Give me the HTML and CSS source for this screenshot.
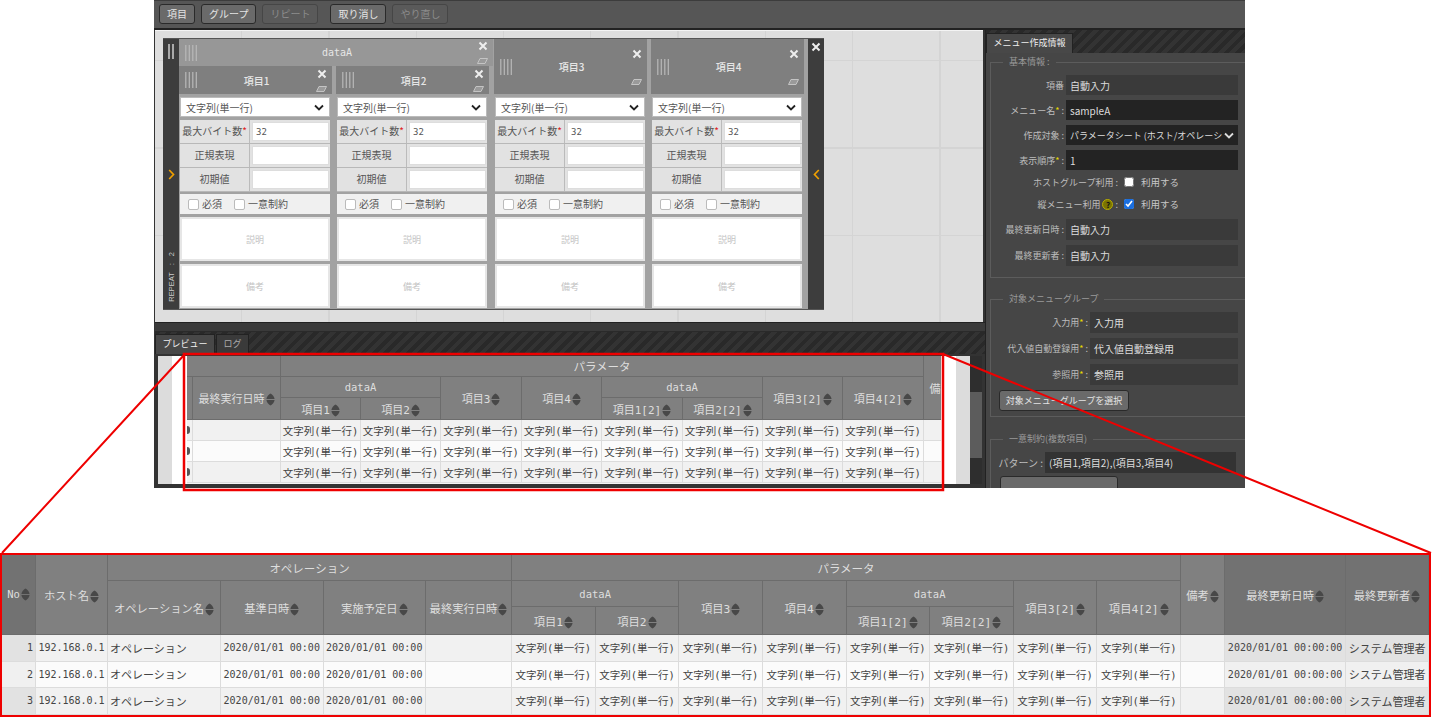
FILE: index.html
```html
<!DOCTYPE html>
<html lang="ja">
<head>
  <meta charset="UTF-8">
  <title>メニュー作成</title>
  <link rel="stylesheet" href="styles.css">
</head>
<body>
  <!-- shared icons -->
  <svg class="defs" aria-hidden="true">
    <symbol id="sort" viewBox="0 0 9 13"><path d="M4.5 .5C6.6 1.6 8.2 3.4 8.6 6H.4C.8 3.4 2.4 1.600 4.500 .5Z" fill="#484848"/><path d="M4.500 12.500C2.400 11.400 .8 9.600 .4 7H8.600C8.200 9.600 6.600 11.400 4.500 12.500Z" fill="#484848"/></symbol>
    <symbol id="grip" viewBox="0 0 13 16"><path d="M.8 0V16M4.300 0V16M7.800 0V16M11.300 0V16" stroke="#b9b9b9" stroke-width="1.200" fill="none"/></symbol>
    <symbol id="close" viewBox="0 0 10 10"><path d="M1.500 1.500L8.500 8.500M8.500 1.500L1.500 8.500" stroke="#eee" stroke-width="2" fill="none"/></symbol>
    <symbol id="eraser" viewBox="0 0 11 6"><path d="M3 .5H10.500L8 5.500H.5Z" fill="#9a9a9a" stroke="#c4c4c4"/></symbol>
    <symbol id="chevron" viewBox="0 0 10 7"><path d="M1 1.500L5 5.500L9 1.500" stroke="currentColor" stroke-width="1.800" fill="none"/></symbol>
    <symbol id="open" viewBox="0 0 7 11"><path d="M1.200 1L5.500 5.500L1.200 10" stroke="#f0a000" stroke-width="1.700" fill="none"/></symbol>
    <symbol id="shut" viewBox="0 0 7 11"><path d="M5.800 1L1.500 5.500L5.800 10" stroke="#f0a000" stroke-width="1.700" fill="none"/></symbol>
  </svg>

  <div class="app">
    <div class="toolbar">
      <button class="btn">項目</button>
      <button class="btn">グループ</button>
      <button class="btn off">リピート</button>
      <button class="btn gap">取り消し</button>
      <button class="btn off">やり直し</button>
    </div>

    <div class="app-body">
      <div class="main">
        <div class="canvas">
          <div class="repeat">
            <div class="side">
              <span class="handle"></span>
              <svg class="arrow"><use href="#open"/></svg>
              <span class="repeat-label">REPEAT : 2</span>
            </div>

            <div class="group">
              <div class="head head-group">
                <svg class="grip"><use href="#grip"/></svg>
                <span class="title">dataA</span>
                <span class="tools"><svg class="ico-x"><use href="#close"/></svg><svg class="ico-e"><use href="#eraser"/></svg></span>
              </div>
              <div class="group-items">
                <div class="item">
                  <div class="head">
                    <svg class="grip"><use href="#grip"/></svg>
                    <span class="title">項目1</span>
                    <span class="tools"><svg class="ico-x"><use href="#close"/></svg><svg class="ico-e"><use href="#eraser"/></svg></span>
                  </div>
                  <div class="item-body">
                    <div class="select">文字列(単一行)<svg class="chev"><use href="#chevron"/></svg></div>
                    <div class="prop"><span class="prop-name">最大バイト数<i>*</i></span><span class="prop-val">32</span></div>
                    <div class="prop"><span class="prop-name">正規表現</span><span class="prop-val"></span></div>
                    <div class="prop"><span class="prop-name">初期値</span><span class="prop-val"></span></div>
                    <div class="checks"><label><input type="checkbox">必須</label><label><input type="checkbox">一意制約</label></div>
                    <div class="note"><span>説明</span></div>
                    <div class="note"><span>備考</span></div>
                  </div>
                </div>
                <div class="item">
                  <div class="head">
                    <svg class="grip"><use href="#grip"/></svg>
                    <span class="title">項目2</span>
                    <span class="tools"><svg class="ico-x"><use href="#close"/></svg><svg class="ico-e"><use href="#eraser"/></svg></span>
                  </div>
                  <div class="item-body">
                    <div class="select">文字列(単一行)<svg class="chev"><use href="#chevron"/></svg></div>
                    <div class="prop"><span class="prop-name">最大バイト数<i>*</i></span><span class="prop-val">32</span></div>
                    <div class="prop"><span class="prop-name">正規表現</span><span class="prop-val"></span></div>
                    <div class="prop"><span class="prop-name">初期値</span><span class="prop-val"></span></div>
                    <div class="checks"><label><input type="checkbox">必須</label><label><input type="checkbox">一意制約</label></div>
                    <div class="note"><span>説明</span></div>
                    <div class="note"><span>備考</span></div>
                  </div>
                </div>
              </div>
            </div>

            <div class="item">
              <div class="head head-tall">
                <svg class="grip"><use href="#grip"/></svg>
                <span class="title">項目3</span>
                <span class="tools"><svg class="ico-x"><use href="#close"/></svg><svg class="ico-e"><use href="#eraser"/></svg></span>
              </div>
              <div class="item-body">
                <div class="select">文字列(単一行)<svg class="chev"><use href="#chevron"/></svg></div>
                <div class="prop"><span class="prop-name">最大バイト数<i>*</i></span><span class="prop-val">32</span></div>
                <div class="prop"><span class="prop-name">正規表現</span><span class="prop-val"></span></div>
                <div class="prop"><span class="prop-name">初期値</span><span class="prop-val"></span></div>
                <div class="checks"><label><input type="checkbox">必須</label><label><input type="checkbox">一意制約</label></div>
                <div class="note"><span>説明</span></div>
                <div class="note"><span>備考</span></div>
              </div>
            </div>

            <div class="item">
              <div class="head head-tall">
                <svg class="grip"><use href="#grip"/></svg>
                <span class="title">項目4</span>
                <span class="tools"><svg class="ico-x"><use href="#close"/></svg><svg class="ico-e"><use href="#eraser"/></svg></span>
              </div>
              <div class="item-body">
                <div class="select">文字列(単一行)<svg class="chev"><use href="#chevron"/></svg></div>
                <div class="prop"><span class="prop-name">最大バイト数<i>*</i></span><span class="prop-val">32</span></div>
                <div class="prop"><span class="prop-name">正規表現</span><span class="prop-val"></span></div>
                <div class="prop"><span class="prop-name">初期値</span><span class="prop-val"></span></div>
                <div class="checks"><label><input type="checkbox">必須</label><label><input type="checkbox">一意制約</label></div>
                <div class="note"><span>説明</span></div>
                <div class="note"><span>備考</span></div>
              </div>
            </div>

            <div class="side side-right">
              <svg class="ico-x"><use href="#close"/></svg>
              <svg class="arrow"><use href="#shut"/></svg>
            </div>
          </div>
        </div>

        <div class="splitter"></div>

        <div class="preview">
          <div class="tabs">
            <span class="tab on">プレビュー</span>
            <span class="tab">ログ</span>
          </div>
          <div class="preview-body">
            <div class="strip"></div>
            <div class="gutter"></div>
            <div class="viewport">
              <table class="grid grid-small">
                <colgroup><col class="p-cut"><col class="p-last"><col class="p-a"><col class="p-a"><col class="p-b"><col class="p-a"><col class="p-b"><col class="p-a"><col class="p-a"><col class="p-b"><col class="p-note"></colgroup>
                <thead>
                  <tr>
                    <th colspan="2"></th>
                    <th colspan="8" class="big">パラメータ</th>
                    <th rowspan="3">備考<svg class="sort"><use href="#sort"/></svg></th>
                  </tr>
                  <tr>
                    <th rowspan="2"></th>
                    <th rowspan="2">最終実行日時<svg class="sort"><use href="#sort"/></svg></th>
                    <th colspan="2" class="latin">dataA</th>
                    <th rowspan="2">項目3<svg class="sort"><use href="#sort"/></svg></th>
                    <th rowspan="2">項目4<svg class="sort"><use href="#sort"/></svg></th>
                    <th colspan="2" class="latin">dataA</th>
                    <th rowspan="2">項目3[2]<svg class="sort"><use href="#sort"/></svg></th>
                    <th rowspan="2">項目4[2]<svg class="sort"><use href="#sort"/></svg></th>
                  </tr>
                  <tr>
                    <th>項目1<svg class="sort"><use href="#sort"/></svg></th>
                    <th>項目2<svg class="sort"><use href="#sort"/></svg></th>
                    <th>項目1[2]<svg class="sort"><use href="#sort"/></svg></th>
                    <th>項目2[2]<svg class="sort"><use href="#sort"/></svg></th>
                  </tr>
                </thead>
                <tbody>
                  <tr><td class="cut"><span></span></td><td></td><td>文字列(単一行)</td><td>文字列(単一行)</td><td>文字列(単一行)</td><td>文字列(単一行)</td><td>文字列(単一行)</td><td>文字列(単一行)</td><td>文字列(単一行)</td><td>文字列(単一行)</td><td></td></tr>
                  <tr><td class="cut"><span></span></td><td></td><td>文字列(単一行)</td><td>文字列(単一行)</td><td>文字列(単一行)</td><td>文字列(単一行)</td><td>文字列(単一行)</td><td>文字列(単一行)</td><td>文字列(単一行)</td><td>文字列(単一行)</td><td></td></tr>
                  <tr><td class="cut"><span></span></td><td></td><td>文字列(単一行)</td><td>文字列(単一行)</td><td>文字列(単一行)</td><td>文字列(単一行)</td><td>文字列(単一行)</td><td>文字列(単一行)</td><td>文字列(単一行)</td><td>文字列(単一行)</td><td></td></tr>
                </tbody>
              </table>
            </div>
            <div class="gutter"></div>
            <div class="strip"></div>
            <div class="scrollbar"><span></span></div>
          </div>
        </div>
      </div>

      <div class="panel">
        <div class="tabs tabs-panel">
          <span class="tab on">メニュー作成情報</span>
        </div>

        <fieldset class="box box-info">
          <legend>基本情報 :</legend>
          <div class="field"><span class="field-label">項番</span><span class="field-box">自動入力</span></div>
          <div class="field"><span class="field-label">メニュー名<i>*</i> :</span><span class="field-box edit">sampleA</span></div>
          <div class="field"><span class="field-label">作成対象 :</span><span class="field-box edit select-dark">パラメータシート (ホスト/オペレーシ<svg class="chev chev-light"><use href="#chevron"/></svg></span></div>
          <div class="field"><span class="field-label">表示順序<i>*</i> :</span><span class="field-box edit">1</span></div>
          <div class="field field-check"><span class="field-label">ホストグループ利用 :</span><label class="check-text"><input type="checkbox">利用する</label></div>
          <div class="field field-check"><span class="field-label">縦メニュー利用 <b class="help">?</b> :</span><label class="check-text"><input type="checkbox" checked>利用する</label></div>
          <div class="field"><span class="field-label">最終更新日時 :</span><span class="field-box tall">自動入力</span></div>
          <div class="field"><span class="field-label">最終更新者 :</span><span class="field-box tall">自動入力</span></div>
        </fieldset>

        <fieldset class="box box-group">
          <legend>対象メニューグループ</legend>
          <div class="field"><span class="field-label">入力用<i>*</i> :</span><span class="field-box tall">入力用</span></div>
          <div class="field"><span class="field-label">代入値自動登録用<i>*</i> :</span><span class="field-box tall">代入値自動登録用</span></div>
          <div class="field"><span class="field-label">参照用<i>*</i> :</span><span class="field-box tall">参照用</span></div>
          <button class="btn btn-wide">対象メニューグループを選択</button>
        </fieldset>

        <fieldset class="box box-unique">
          <legend>一意制約(複数項目)</legend>
          <div class="field"><span class="field-label">パターン :</span><span class="field-box tall">(項目1,項目2),(項目3,項目4)</span></div>
          <button class="btn btn-cut"></button>
        </fieldset>
      </div>
    </div>
  </div>

  <div class="detail">
    <table class="grid grid-large">
      <colgroup><col class="c-no"><col class="c-host"><col class="c-op"><col class="c-date"><col class="c-date"><col class="c-last"><col class="c-a"><col class="c-a"><col class="c-a"><col class="c-a"><col class="c-a"><col class="c-a"><col class="c-a"><col class="c-a"><col class="c-note"><col class="c-upd"><col class="c-user"></colgroup>
      <thead>
        <tr>
          <th rowspan="3" class="fixed latin">No<svg class="sort"><use href="#sort"/></svg></th>
          <th rowspan="3">ホスト名<svg class="sort"><use href="#sort"/></svg></th>
          <th colspan="4" class="big">オペレーション</th>
          <th colspan="8" class="big">パラメータ</th>
          <th rowspan="3">備考<svg class="sort"><use href="#sort"/></svg></th>
          <th rowspan="3" class="fixed">最終更新日時<svg class="sort"><use href="#sort"/></svg></th>
          <th rowspan="3" class="fixed">最終更新者<svg class="sort"><use href="#sort"/></svg></th>
        </tr>
        <tr>
          <th rowspan="2">オペレーション名<svg class="sort"><use href="#sort"/></svg></th>
          <th rowspan="2">基準日時<svg class="sort"><use href="#sort"/></svg></th>
          <th rowspan="2">実施予定日<svg class="sort"><use href="#sort"/></svg></th>
          <th rowspan="2">最終実行日時<svg class="sort"><use href="#sort"/></svg></th>
          <th colspan="2" class="latin">dataA</th>
          <th rowspan="2">項目3<svg class="sort"><use href="#sort"/></svg></th>
          <th rowspan="2">項目4<svg class="sort"><use href="#sort"/></svg></th>
          <th colspan="2" class="latin">dataA</th>
          <th rowspan="2">項目3[2]<svg class="sort"><use href="#sort"/></svg></th>
          <th rowspan="2">項目4[2]<svg class="sort"><use href="#sort"/></svg></th>
        </tr>
        <tr>
          <th>項目1<svg class="sort"><use href="#sort"/></svg></th>
          <th>項目2<svg class="sort"><use href="#sort"/></svg></th>
          <th>項目1[2]<svg class="sort"><use href="#sort"/></svg></th>
          <th>項目2[2]<svg class="sort"><use href="#sort"/></svg></th>
        </tr>
      </thead>
      <tbody>
        <tr><td class="fixed num">1</td><td class="mono">192.168.0.1</td><td class="left">オペレーション</td><td class="mono">2020/01/01 00:00</td><td class="mono">2020/01/01 00:00</td><td></td><td>文字列(単一行)</td><td>文字列(単一行)</td><td>文字列(単一行)</td><td>文字列(単一行)</td><td>文字列(単一行)</td><td>文字列(単一行)</td><td>文字列(単一行)</td><td>文字列(単一行)</td><td></td><td class="fixed mono">2020/01/01 00:00:00</td><td class="fixed kana">システム管理者</td></tr>
        <tr><td class="fixed num">2</td><td class="mono">192.168.0.1</td><td class="left">オペレーション</td><td class="mono">2020/01/01 00:00</td><td class="mono">2020/01/01 00:00</td><td></td><td>文字列(単一行)</td><td>文字列(単一行)</td><td>文字列(単一行)</td><td>文字列(単一行)</td><td>文字列(単一行)</td><td>文字列(単一行)</td><td>文字列(単一行)</td><td>文字列(単一行)</td><td></td><td class="fixed mono">2020/01/01 00:00:00</td><td class="fixed kana">システム管理者</td></tr>
        <tr><td class="fixed num">3</td><td class="mono">192.168.0.1</td><td class="left">オペレーション</td><td class="mono">2020/01/01 00:00</td><td class="mono">2020/01/01 00:00</td><td></td><td>文字列(単一行)</td><td>文字列(単一行)</td><td>文字列(単一行)</td><td>文字列(単一行)</td><td>文字列(単一行)</td><td>文字列(単一行)</td><td>文字列(単一行)</td><td>文字列(単一行)</td><td></td><td class="fixed mono">2020/01/01 00:00:00</td><td class="fixed kana">システム管理者</td></tr>
      </tbody>
    </table>
  </div>

  <!-- red callout drawn over the screenshot -->
  <svg class="callout" width="1433" height="718" aria-hidden="true">
    <rect x="184" y="354" width="759" height="136" fill="none" stroke="#ee0000" stroke-width="2.500"/>
    <path d="M185 354L2 553M943 354L1431 553" fill="none" stroke="#ee0000" stroke-width="2"/>
  </svg>
</body>
</html>
```

FILE: styles.css
```css
* {
  box-sizing: border-box;
}
html, body {
  margin: 0;
  height: 718px;
  overflow: hidden;
}
body {
  position: relative;
  background-color: #fff;
  font-family: "Noto Sans CJK JP", "Noto Sans", sans-serif;
  font-size: 10px;
  color: #555;
}
.defs {
  position: absolute;
  width: 0;
  height: 0;
}
.callout {
  position: absolute;
  left: 0;
  top: 0;
  pointer-events: none;
}

/* app frame */
.app {
  width: 1091px;
  height: 488px;
  margin-left: 154px;
  background-color: #333;
  overflow: hidden;
}
.toolbar {
  display: flex;
  align-items: center;
  gap: 6px;
  height: 30px;
  padding: 1px 5px 2px;
  background-color: #565656;
  border-top: 1px solid #3c3c3c;
  border-bottom: 2px solid #222;
}
.btn {
  height: 20px;
  padding: 0 7px;
  background-color: #6a6a6a;
  border: 1px solid #2a2a2a;
  border-radius: 3px;
  color: #e4e4e4;
  font-family: inherit;
  font-size: 10px;
  line-height: 16px;
}
.btn.off {
  background-color: #5a5a5a;
  border-color: #464646;
  color: #8c8c8c;
}
.btn.gap {
  margin-left: 6px;
}
.app-body {
  display: flex;
  height: 458px;
}
.main {
  width: 831px;
  padding-left: 1px;
}

/* canvas */
.canvas {
  height: 292px;
  width: 828px;
  padding: 7px 0 0 8px;
  background-color: #dedede;
  background-image:
    repeating-linear-gradient(90deg, transparent 0 86px, #d4d4d4 86px 87.3px),
    repeating-linear-gradient(0deg, transparent 0 86px, #d4d4d4 86px 87.5px);
  border-top: 1px solid #f4f4f4;
}
.repeat {
  display: flex;
  width: 661px;
  height: 272px;
  background-color: #a2a2a2;
  border-top: 1px solid #555;
  border-bottom: 1px solid #555;
}
.side {
  display: flex;
  flex-direction: column;
  align-items: center;
  width: 16px;
  background-color: #3d3d3d;
  color: #ccc;
}
.side-right {
  margin-left: 4px;
  padding-top: 3px;
}
.handle {
  width: 6px;
  height: 15px;
  margin-top: 5px;
  border-left: 2px solid #aaa;
  border-right: 2px solid #aaa;
}
.arrow {
  width: 7px;
  height: 11px;
  flex: none;
  margin-top: 110px;
}
.side-right .arrow {
  margin-top: 117px;
}
.repeat-label {
  margin-top: auto;
  margin-bottom: 7px;
  writing-mode: vertical-rl;
  transform: rotate(180deg);
  font-family: "Liberation Sans", sans-serif;
  font-size: 7.500px;
  word-spacing: 5px;
}
.group {
  width: 314px;
  margin-right: 1px;
}
.group-items {
  display: flex;
  gap: 4px;
}
.item {
  width: 153px;
  flex: none;
}
.item + .side {
  margin-left: 4px;
}
.group + .item + .item {
  margin-left: 4px;
}
.head {
  display: flex;
  align-items: center;
  height: 28px;
  padding: 0 4px 0 6px;
  background-color: #7f7f7f;
  color: #e6e6e6;
  font-size: 10px;
  font-weight: 500;
}
.head-group {
  height: 27px;
  background-color: #979797;
  font-family: "DejaVu Sans Mono", monospace;
  font-size: 10px;
}
.head-tall {
  height: 55px;
}
.grip {
  width: 13px;
  height: 16px;
}
.title {
  flex: 1;
  text-align: center;
}
.tools {
  display: flex;
  flex-direction: column;
  align-items: center;
  justify-content: space-between;
  width: 13px;
  height: 23px;
}
.head-tall .tools {
  height: 36px;
}
.ico-x {
  width: 10px;
  height: 10px;
  flex: none;
}
.ico-e {
  width: 11px;
  height: 6px;
}
.item-body {
  display: flex;
  flex-direction: column;
  padding: 3px 2px 0 1px;
}
.select {
  display: flex;
  align-items: center;
  justify-content: space-between;
  height: 20px;
  padding: 0 5px;
  background-color: #fff;
  border: 1px solid #bbb;
  color: #555;
  font-size: 10px;
}
.chev {
  width: 10px;
  height: 7px;
  flex: none;
  color: #222;
}
.prop {
  display: flex;
  height: 24px;
  background-color: #e2e2e2;
  border-bottom: 1px solid #b8b8b8;
}
.select + .prop {
  margin-top: 3px;
}
.prop-name {
  width: 70px;
  line-height: 22px;
  text-align: center;
  white-space: nowrap;
  border-right: 1px solid #bbb;
}
.prop-name i {
  color: #e02020;
  font-style: normal;
}
.prop-val {
  flex: 1;
  margin: 2px 1px 2px 2px;
  padding-left: 3px;
  background-color: #fff;
  border: 1px solid #ddd;
  font-family: "DejaVu Sans Mono", monospace;
  font-size: 9px;
  line-height: 18px;
}
.checks {
  display: flex;
  gap: 12px;
  height: 20px;
  margin-top: 2px;
  padding-left: 8px;
  background-color: #f0f0f0;
  line-height: 20px;
}
.checks label {
  display: flex;
  align-items: center;
}
.checks input {
  appearance: none;
  width: 11px;
  height: 11px;
  margin: 0 3px 0 0;
  background-color: #fff;
  border: 1px solid #bbb;
  border-radius: 2px;
}
.note {
  display: flex;
  align-items: center;
  justify-content: center;
  height: 44px;
  margin-top: 3px;
  background-color: #fff;
  border: 2px solid #e6e6e6;
  color: #c4c4c4;
  font-size: 9px;
}

/* splitter and preview */
.splitter {
  height: 10px;
  background-color: #3a3a3a;
  border-top: 1px solid #222;
  border-bottom: 1px solid #2a2a2a;
}
.preview {
  height: 156px;
  width: 830px;
}
.tabs {
  display: flex;
  align-items: flex-end;
  height: 22px;
  background-image: repeating-linear-gradient(135deg, #292929 0 4px, #333 4px 8px);
}
.tab {
  height: 20px;
  padding: 0 6.500px;
  margin-right: 1px;
  background-color: #3a3a3a;
  border: 1px solid #222;
  border-bottom: none;
  color: #aaa;
  font-size: 9px;
  line-height: 18px;
  white-space: nowrap;
}
.tab.on {
  background-color: #484848;
  color: #eee;
}
.preview-body {
  display: flex;
  height: 128px;
  margin: 2px 0 0 3px;
}
.strip {
  width: 14px;
  flex: none;
  background-color: #dcdcdc;
}
.gutter {
  width: 15px;
  flex: none;
  background-color: #fff;
}
.viewport {
  width: 754px;
  flex: none;
  overflow: hidden;
  background-color: #f4f4f4;
}
.scrollbar {
  width: 12px;
  flex: none;
  padding-top: 36px;
  background-color: #2e2e2e;
}
.scrollbar span {
  display: block;
  height: 66px;
  background-color: #5c5c5c;
}

/* tables */
.grid {
  border-collapse: separate;
  border-spacing: 0;
  table-layout: fixed;
  font-family: "DejaVu Sans Mono", "Noto Sans CJK JP", monospace;
  font-size: 10.500px;
}
.grid th {
  padding: 0;
  background-color: #808080;
  border-right: 1px solid #6c6c6c;
  border-bottom: 1px solid #6c6c6c;
  color: #dedede;
  font-size: 11px;
  font-weight: normal;
  white-space: nowrap;
  overflow: hidden;
}
.grid th.big {
  font-size: 11.500px;
}
.grid th.latin {
  font-size: 10.500px;
}
.grid td {
  padding: 0;
  border-right: 1px solid #dcdcdc;
  border-bottom: 1px solid #dcdcdc;
  color: #444;
  text-align: center;
  white-space: nowrap;
  overflow: hidden;
}
.grid tbody tr:nth-child(odd) td {
  background-color: #f1f1f1;
}
.grid tbody tr:nth-child(even) td {
  background-color: #fbfbfb;
}
.sort {
  width: 9px;
  height: 13px;
  margin-left: 1px;
  vertical-align: -3px;
}
.grid th.fixed {
  background-color: #727272;
}
.grid tbody tr td.fixed {
  background-color: #e2e2e2;
}
.grid tbody tr:nth-child(even) td.fixed {
  background-color: #f0f0f0;
}
.grid td.mono {
  font-size: 10px;
}
.grid td.left {
  padding-left: 2px;
  font-size: 11px;
  text-align: left;
}
.grid td.kana {
  font-size: 11px;
}
.grid td.num {
  padding-right: 2px;
  font-size: 10px;
  text-align: right;
}
.grid-small {
  width: 781px;
}
.grid-small thead tr {
  height: 21px;
}
.grid-small thead tr:last-child {
  height: 22px;
}
.grid-small tbody tr {
  height: 21px;
}
.grid-small td.cut {
  text-align: left;
}
.cut span {
  display: block;
  width: 3px;
  height: 8px;
  background-color: #555;
  border-radius: 0 4px 4px 0;
}
.p-cut { width: 6px; }
.p-last { width: 88px; }
.p-a { width: 80px; }
.p-b { width: 81px; }
.p-note { width: 44px; }

.detail {
  width: 1431px;
  margin-top: 65px;
  border: 2px solid #ee0000;
}
.grid-large {
  width: 1427px;
}
.grid-large th {
  font-size: 11.300px;
}
.grid-large thead tr {
  height: 26px;
}
.grid-large thead tr:last-child {
  height: 28px;
}
.grid-large tbody tr {
  height: 26.500px;
}
.c-no { width: 34px; }
.c-host { width: 72px; }
.c-op { width: 113px; }
.c-date { width: 102.500px; }
.c-last { width: 86px; }
.c-a { width: 83.630px; }
.c-note { width: 44px; }
.c-upd { width: 121px; }
.c-user { width: 83px; }

/* right panel */
.panel {
  flex: 1;
  background-color: #464646;
  border-left: 1px solid #222;
  overflow: hidden;
  color: #bdbdbd;
}
.tabs-panel {
  height: 23px;
}
.box {
  width: 258px;
  min-width: 0;
  margin: 2px 0 0 4px;
  padding: 0 0 6px;
  border: 1px solid #5c5c5c;
  border-right: none;
}
.box legend {
  height: 14px;
  margin-left: 12px;
  padding: 0 6px;
  color: #9a9a9a;
  font-size: 9px;
  line-height: 14px;
}
.box-info {
  padding-top: 6px;
}
.box-group {
  margin-top: 14px;
  padding-top: 6px;
  padding-bottom: 5px;
}
.box-unique {
  margin-top: 15px;
  padding-top: 6px;
}
.field {
  display: flex;
  align-items: center;
  gap: 2px;
  margin-bottom: 5px;
}
.field-label {
  width: 73px;
  flex: none;
  font-size: 9px;
  text-align: right;
  white-space: nowrap;
}
.field-label i {
  color: #e6d800;
  font-style: normal;
}
.field-box {
  display: flex;
  align-items: center;
  justify-content: space-between;
  width: 172px;
  height: 20px;
  padding: 0 4px;
  background-color: #3a3a3a;
  color: #ddd;
  font-size: 10px;
  white-space: nowrap;
}
.field-box.edit {
  background-color: #232323;
}
.field-box.tall {
  height: 21px;
}
.select-dark {
  font-size: 9px;
}
.chev-light {
  color: #ddd;
}
.field-check {
  height: 20px;
  margin-top: -3px;
}
.field-check .field-label {
  width: 127px;
}
.check-text {
  display: flex;
  align-items: center;
  margin-left: 4px;
  color: #c8c8c8;
  font-size: 9.500px;
}
.check-text input {
  width: 10px;
  height: 10px;
  margin: 0 7px 0 0;
  accent-color: #1a6fe0;
}
.help {
  display: inline-block;
  width: 11px;
  height: 11px;
  background-color: #7a7400;
  border: 1px solid #b8ac00;
  border-radius: 50%;
  color: #111;
  font-size: 8px;
  line-height: 9px;
  text-align: center;
}
.box-group .field-label {
  width: 97px;
  font-size: 9px;
}
.box-group .field-box {
  width: 148px;
}
.box-group .btn-wide {
  display: block;
  width: 130px;
  height: 21px;
  margin: 3px 0 0 8px;
  padding: 0;
  font-size: 9px;
  white-space: nowrap;
}
.box-unique .field-label {
  width: 52px;
  font-size: 10px;
}
.box-unique .field-box {
  width: 191px;
  background-color: #333;
  font-size: 10px;
}
.btn-cut {
  display: block;
  width: 118px;
  height: 22px;
  margin: -2px 0 0 9px;
}
```
